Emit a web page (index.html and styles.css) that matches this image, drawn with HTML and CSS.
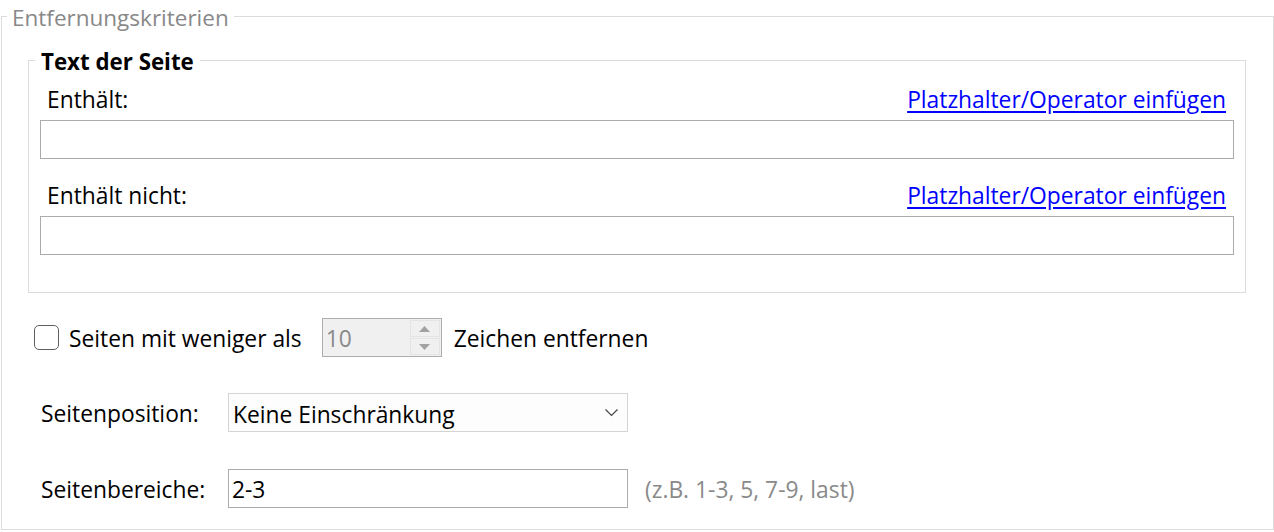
FILE: index.html
```html
<!DOCTYPE html>
<html lang="de">
<head>
<meta charset="utf-8">
<title>Entfernungskriterien</title>
<link rel="stylesheet" href="styles.css">
</head>
<body>
<fieldset class="outer">
  <legend class="outer-legend">Entfernungskriterien</legend>
  <fieldset class="inner">
    <legend class="inner-legend">Text der Seite</legend>
    <div class="label-row">
      <span class="label">Enthält:</span>
      <a class="link" href="#">Platzhalter/Operator einfügen</a>
    </div>
    <div class="textbox wide"></div>
    <div class="label-row second">
      <span class="label">Enthält nicht:</span>
      <a class="link" href="#">Platzhalter/Operator einfügen</a>
    </div>
    <div class="textbox wide"></div>
  </fieldset>

  <div class="check-row">
    <span class="checkbox"></span>
    <span class="check-label">Seiten mit weniger als</span>
    <div class="spinner">
      <span class="spin-value">10</span>
      <div class="spin-buttons">
        <span class="spin-btn"><svg width="11" height="6" viewBox="0 0 11 6"><polygon points="5.5,0 11,6 0,6" fill="#a2a2a2"/></svg></span>
        <span class="spin-btn"><svg width="11" height="6" viewBox="0 0 11 6"><polygon points="0,0 11,0 5.5,6" fill="#a2a2a2"/></svg></span>
      </div>
    </div>
    <span class="after-label">Zeichen entfernen</span>
  </div>

  <div class="form-row first">
    <span class="row-label">Seitenposition:</span>
    <div class="dropdown">
      <span class="dropdown-value">Keine Einschränkung</span>
      <svg class="chevron" width="13" height="8" viewBox="0 0 13 8"><polyline points="0.5,0.5 6.5,6.5 12.5,0.5" fill="none" stroke="#444" stroke-width="1.2"/></svg>
    </div>
  </div>

  <div class="form-row second-form">
    <span class="row-label">Seitenbereiche:</span>
    <div class="textbox range"><span class="range-value">2-3</span></div>
    <span class="hint">(z.B. 1-3, 5, 7-9, last)</span>
  </div>
</fieldset>
</body>
</html>
```

FILE: styles.css
```css
html, body {
  margin: 0;
  padding: 0;
  background: #ffffff;
}

body {
  font-family: "Open Sans", "Noto Sans", "DejaVu Sans", sans-serif;
  font-size: 22.8px;
  color: #000000;
  width: 1274px;
  height: 532px;
  overflow: hidden;
}

.outer {
  margin: 1px 0 0 1px;
  padding: 0 0 21px 5px;
  border: 1px solid #dcdcdc;
  box-sizing: border-box;
  width: 1273px;
}

.outer-legend {
  padding: 4px 5px 0;
  font-size: 22.5px;
  line-height: 26px;
  color: #888888;
}

.inner {
  margin: 14px 27px 0 21px;
  padding: 0 11px 37px 11px;
  border: 1px solid #dcdcdc;
}

.inner-legend {
  margin-left: -5px;
  padding: 4px 6px 0;
  font-size: 22.3px;
  font-weight: 700;
  line-height: 26px;
}

.label-row {
  display: flex;
  justify-content: space-between;
  align-items: center;
  height: 30px;
  margin-top: 9px;
  padding: 0 8px 0 7px;
}

.label-row.second {
  margin-top: 21px;
}

.link {
  color: #0000ff;
  text-decoration: underline;
  text-underline-offset: 3px;
}

.textbox {
  box-sizing: border-box;
  height: 39px;
  border: 1px solid #ababab;
  background: #ffffff;
}

.textbox.wide {
  margin-top: 6px;
}

.check-row {
  display: flex;
  align-items: center;
  height: 39px;
  margin-top: 25px;
  padding-left: 27px;
}

.checkbox {
  box-sizing: border-box;
  width: 25px;
  height: 25px;
  border: 1px solid #5f5f5f;
  border-radius: 5px;
  background: #ffffff;
}

.check-label {
  margin-left: 10px;
  padding-top: 2px;
}

.spinner {
  box-sizing: border-box;
  display: flex;
  align-items: stretch;
  width: 120px;
  height: 39px;
  margin-left: 20px;
  border: 1px solid #adadad;
  background: #f0f0f0;
}

.spin-value {
  flex: 1;
  display: flex;
  align-items: center;
  padding: 2px 0 0 3px;
  color: #8a8a8a;
}

.spin-buttons {
  display: flex;
  flex-direction: column;
  width: 30px;
  padding: 1px 1px 1px 0;
  gap: 1px;
}

.spin-btn {
  flex: 1;
  display: flex;
  align-items: center;
  justify-content: center;
  border: 1px solid #e4e4e4;
  background: #f0f0f0;
}

.after-label {
  margin-left: 12px;
  padding-top: 2px;
}

.form-row {
  display: flex;
  align-items: center;
  padding-left: 34px;
}

.form-row.first {
  margin-top: 36px;
}

.form-row.second-form {
  margin-top: 37px;
}

.row-label {
  width: 187px;
  padding-top: 2px;
}

.dropdown {
  box-sizing: border-box;
  display: flex;
  align-items: center;
  justify-content: space-between;
  width: 400px;
  height: 39px;
  padding: 0 9px 0 4px;
  border: 1px solid #d4d4d4;
  background: #fdfdfd;
}

.dropdown-value {
  padding-top: 3px;
}

.textbox.range {
  width: 400px;
  display: flex;
  align-items: center;
  padding: 2px 0 0 3px;
}

.hint {
  margin-left: 17px;
  padding-top: 2px;
  color: #8a8a8a;
}
```
